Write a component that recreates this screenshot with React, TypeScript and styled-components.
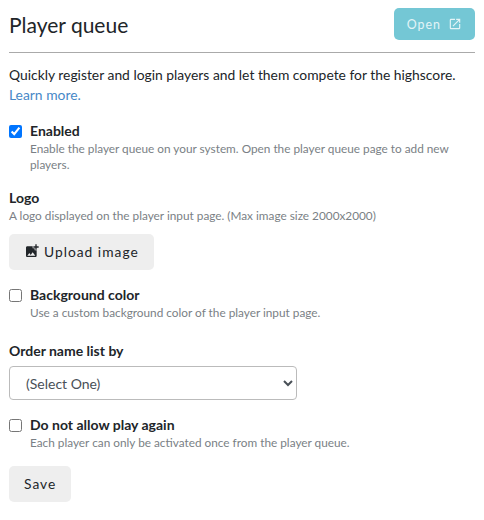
import React from "react";
import styled, { createGlobalStyle } from "styled-components";
import { MdAddPhotoAlternate, MdOpenInNew } from "react-icons/md";

const Global = createGlobalStyle`
  html, body { margin: 0; padding: 0; background: #fff; }
  body { font-family: Lato, "Liberation Sans", sans-serif; color: #212529; }
`;

const Page = styled.div`
  display: flex;
  flex-direction: column;
  padding: 8px 9px 0;
  width: 484px;
  height: 520px;
  box-sizing: border-box;
`;

const Header = styled.header`
  display: flex;
  justify-content: space-between;
  align-items: flex-start;
  height: 44px;
  border-bottom: 1px solid #aaa;
`;

const Title = styled.h1`
  margin: 0;
  font-size: 21px;
  font-weight: 400;
  line-height: 33px;
`;

const Button = styled.button<{ $tone?: "info" | "plain"; $top?: number }>`
  display: inline-flex;
  align-items: center;
  justify-content: center;
  gap: ${(p) => (p.$tone === "info" ? "7px" : "4px")};
  height: ${(p) => (p.$tone === "info" ? "32px" : "36px")};
  padding: ${(p) => (p.$tone === "info" ? "0 13px" : "0 15px 2px")};
  margin-top: ${(p) => p.$top ?? 0}px;
  border: 0;
  border-radius: 5px;
  font-family: inherit;
  font-size: ${(p) => (p.$tone === "info" ? "12.4px" : "13.8px")};
  letter-spacing: 1px;
  color: ${(p) => (p.$tone === "info" ? "#e3f4f7" : "#212529")};
  background: ${(p) => (p.$tone === "info" ? "#74c7d5" : "#eeeeee")};
  align-self: flex-start;
`;

const Intro = styled.p`
  margin: 12px 0 0;
  font-size: 13.86px;
  line-height: 20px;
`;

const LearnMore = styled.a`
  display: block;
  color: #4788c7;
  text-decoration: none;
`;

const CheckRow = styled.label<{ $top: number }>`
  display: grid;
  grid-template-columns: 13px 1fr;
  column-gap: 8px;
  margin-top: ${(p) => p.$top}px;
`;

const Check = styled.input.attrs({ type: "checkbox" })`
  margin: 4px 0 0;
  width: 13px;
  height: 13px;
`;

const Strong = styled.span`
  font-size: 14px;
  font-weight: 700;
  line-height: 20px;
`;

const Hint = styled.div`
  grid-column: 2;
  font-size: 11.8px;
  line-height: 16px;
  color: #7a7f85;
`;

const Field = styled.div<{ $top: number }>`
  display: flex;
  flex-direction: column;
  align-items: flex-start;
  margin-top: ${(p) => p.$top}px;
`;

const Select = styled.select`
  width: 288px;
  height: 34px;
  margin-top: 5px;
  padding: 0 12px;
  border: 1px solid #bbb;
  border-radius: 4px;
  background: #fff;
  font-family: inherit;
  font-size: 14px;
  color: #495057;
`;

export default function App() {
  return (
    <>
      <Global />
      <Page>
        <Header>
          <Title>Player queue</Title>
          <Button $tone="info">
            Open <MdOpenInNew size={14} />
          </Button>
        </Header>
        <Intro>
          Quickly register and login players and let them compete for the highscore.
          <LearnMore href="#">Learn more.</LearnMore>
        </Intro>
        <CheckRow $top={16}>
          <Check defaultChecked />
          <Strong>Enabled</Strong>
          <Hint>Enable the player queue on your system. Open the player queue page to add new players.</Hint>
        </CheckRow>
        <Field $top={15}>
          <Strong>Logo</Strong>
          <Hint>A logo displayed on the player input page. (Max image size 2000x2000)</Hint>
          <Button $top={10}>
            <MdAddPhotoAlternate size={16} /> Upload image
          </Button>
        </Field>
        <CheckRow $top={15}>
          <Check />
          <Strong>Background color</Strong>
          <Hint>Use a custom background color of the player input page.</Hint>
        </CheckRow>
        <Field $top={20}>
          <Strong>Order name list by</Strong>
          <Select defaultValue="">
            <option value="">(Select One)</option>
          </Select>
        </Field>
        <CheckRow $top={15}>
          <Check />
          <Strong>Do not allow play again</Strong>
          <Hint>Each player can only be activated once from the player queue.</Hint>
        </CheckRow>
        <Field $top={15}>
          <Button>Save</Button>
        </Field>
      </Page>
    </>
  );
}
